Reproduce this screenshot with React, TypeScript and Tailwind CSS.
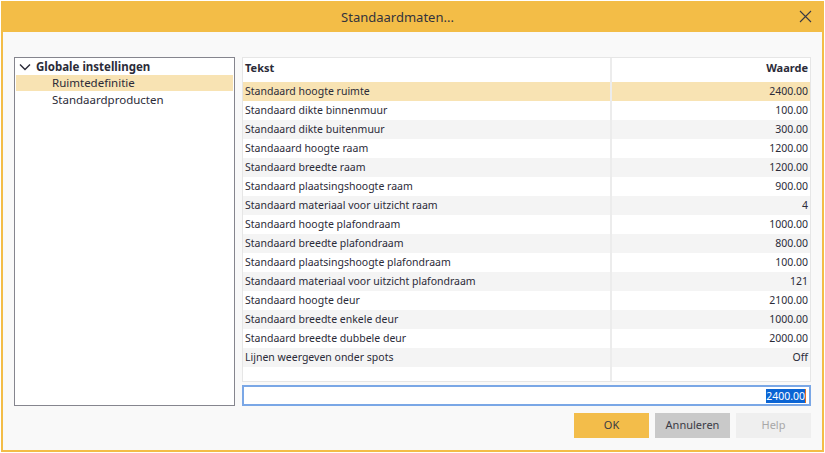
import React from "react";

const rows: [string, string][] = [
  ["Standaard hoogte ruimte", "2400.00"],
  ["Standaard dikte binnenmuur", "100.00"],
  ["Standaard dikte buitenmuur", "300.00"],
  ["Standaaard hoogte raam", "1200.00"],
  ["Standaard breedte raam", "1200.00"],
  ["Standaard plaatsingshoogte raam", "900.00"],
  ["Standaard materiaal voor uitzicht raam", "4"],
  ["Standaard hoogte plafondraam", "1000.00"],
  ["Standaard breedte plafondraam", "800.00"],
  ["Standaard plaatsingshoogte plafondraam", "100.00"],
  ["Standaard materiaal voor uitzicht plafondraam", "121"],
  ["Standaard hoogte deur", "2100.00"],
  ["Standaard breedte enkele deur", "1000.00"],
  ["Standaard breedte dubbele deur", "2000.00"],
  ["Lijnen weergeven onder spots", "Off"],
];

export default function App() {
  return (
    <div
      className="w-[825px] h-[453px] bg-white p-px text-[#2b2b38]"
      style={{ fontFamily: '"Noto Sans", "Open Sans", sans-serif' }}
    >
      <div className="flex h-[451px] w-[823px] flex-col border-2 border-[#f3bd47] bg-[#f9f9f9]">
        {/* Title bar */}
        <div className="relative flex h-[29px] shrink-0 items-center justify-center bg-[#f3bd47] pr-[30px]">
          <span className="text-[13px] text-[#33333d]">Standaardmaten...</span>
          <svg
            className="absolute right-[10px] top-[7px]"
            width="13"
            height="13"
            viewBox="0 0 13 13"
          >
            <path d="M1 1 L12 12 M12 1 L1 12" stroke="#3a3a44" strokeWidth="1.1" fill="none" />
          </svg>
        </div>

        {/* Body */}
        <div className="flex flex-1 flex-col px-[11px] pt-[25px]">
          <div className="flex gap-[7px]">
            {/* Tree */}
            <div className="h-[349px] w-[221px] shrink-0 border border-[#85858e] bg-white text-[11.5px]">
              <div className="flex h-[17px] items-center pl-[4px] font-bold">
                <svg width="12" height="8" viewBox="0 0 12 8" className="mr-[5px]">
                  <path d="M1 1.5 L6 6.5 L11 1.5" stroke="#2b2b38" strokeWidth="1.4" fill="none" />
                </svg>
                Globale instellingen
              </div>
              <div className="mx-px flex h-[16px] items-center bg-[#f8e3b3] pl-[36px]">Ruimtedefinitie</div>
              <div className="flex h-[17px] items-center pl-[37px]">Standaardproducten</div>
            </div>

            {/* Table + input */}
            <div className="flex w-[569px] flex-col gap-[3px]">
              <div className="flex h-[325px] flex-col border border-[#e6e6e6] bg-white text-[10.5px]">
                <div className="flex h-[24px] shrink-0 font-bold text-[11px]">
                  <div className="flex h-full w-[369px] items-start border-r-2 border-[#ececec] pl-[2px] pt-[2px]">
                    Tekst
                  </div>
                  <div className="flex-1 pr-[2px] pt-[2px] text-right">Waarde</div>
                </div>
                {rows.map(([label, value], i) => (
                  <div
                    key={i}
                    className={
                      "flex h-[19px] shrink-0 items-center " +
                      (i === 0 ? "bg-[#f8e3b3]" : i % 2 === 0 ? "bg-[#f4f4f4]" : "bg-white")
                    }
                  >
                    <div className="flex h-full w-[369px] items-center border-r-2 border-[#ececec] pl-[2px]">
                      {label}
                    </div>
                    <div className="flex-1 pr-[2px] text-right">{value}</div>
                  </div>
                ))}
                <div className="flex flex-1">
                  <div className="h-full w-[369px] border-r-2 border-[#ececec]" />
                </div>
              </div>
              <div className="flex h-[21px] items-center justify-end border-2 border-[#7aa7e6] bg-white pr-[3px] text-[10.5px]">
                <span className="bg-[#0a64d4] leading-[14px] text-white">2400.00</span>
                <span className="h-[14px] w-px bg-[#e07020]" />
              </div>
            </div>
          </div>

          {/* Buttons */}
          <div className="mt-[7px] flex justify-end gap-[6px] text-[11px]">
            <button className="h-[25px] w-[75px] bg-[#f3bd4a] text-[#3a3a44]">OK</button>
            <button className="h-[25px] w-[75px] bg-[#c9c9c9] text-[#3a3a44]">Annuleren</button>
            <button className="h-[25px] w-[75px] bg-[#efefef] text-[#a8a8a8]">Help</button>
          </div>
        </div>
      </div>
    </div>
  );
}
